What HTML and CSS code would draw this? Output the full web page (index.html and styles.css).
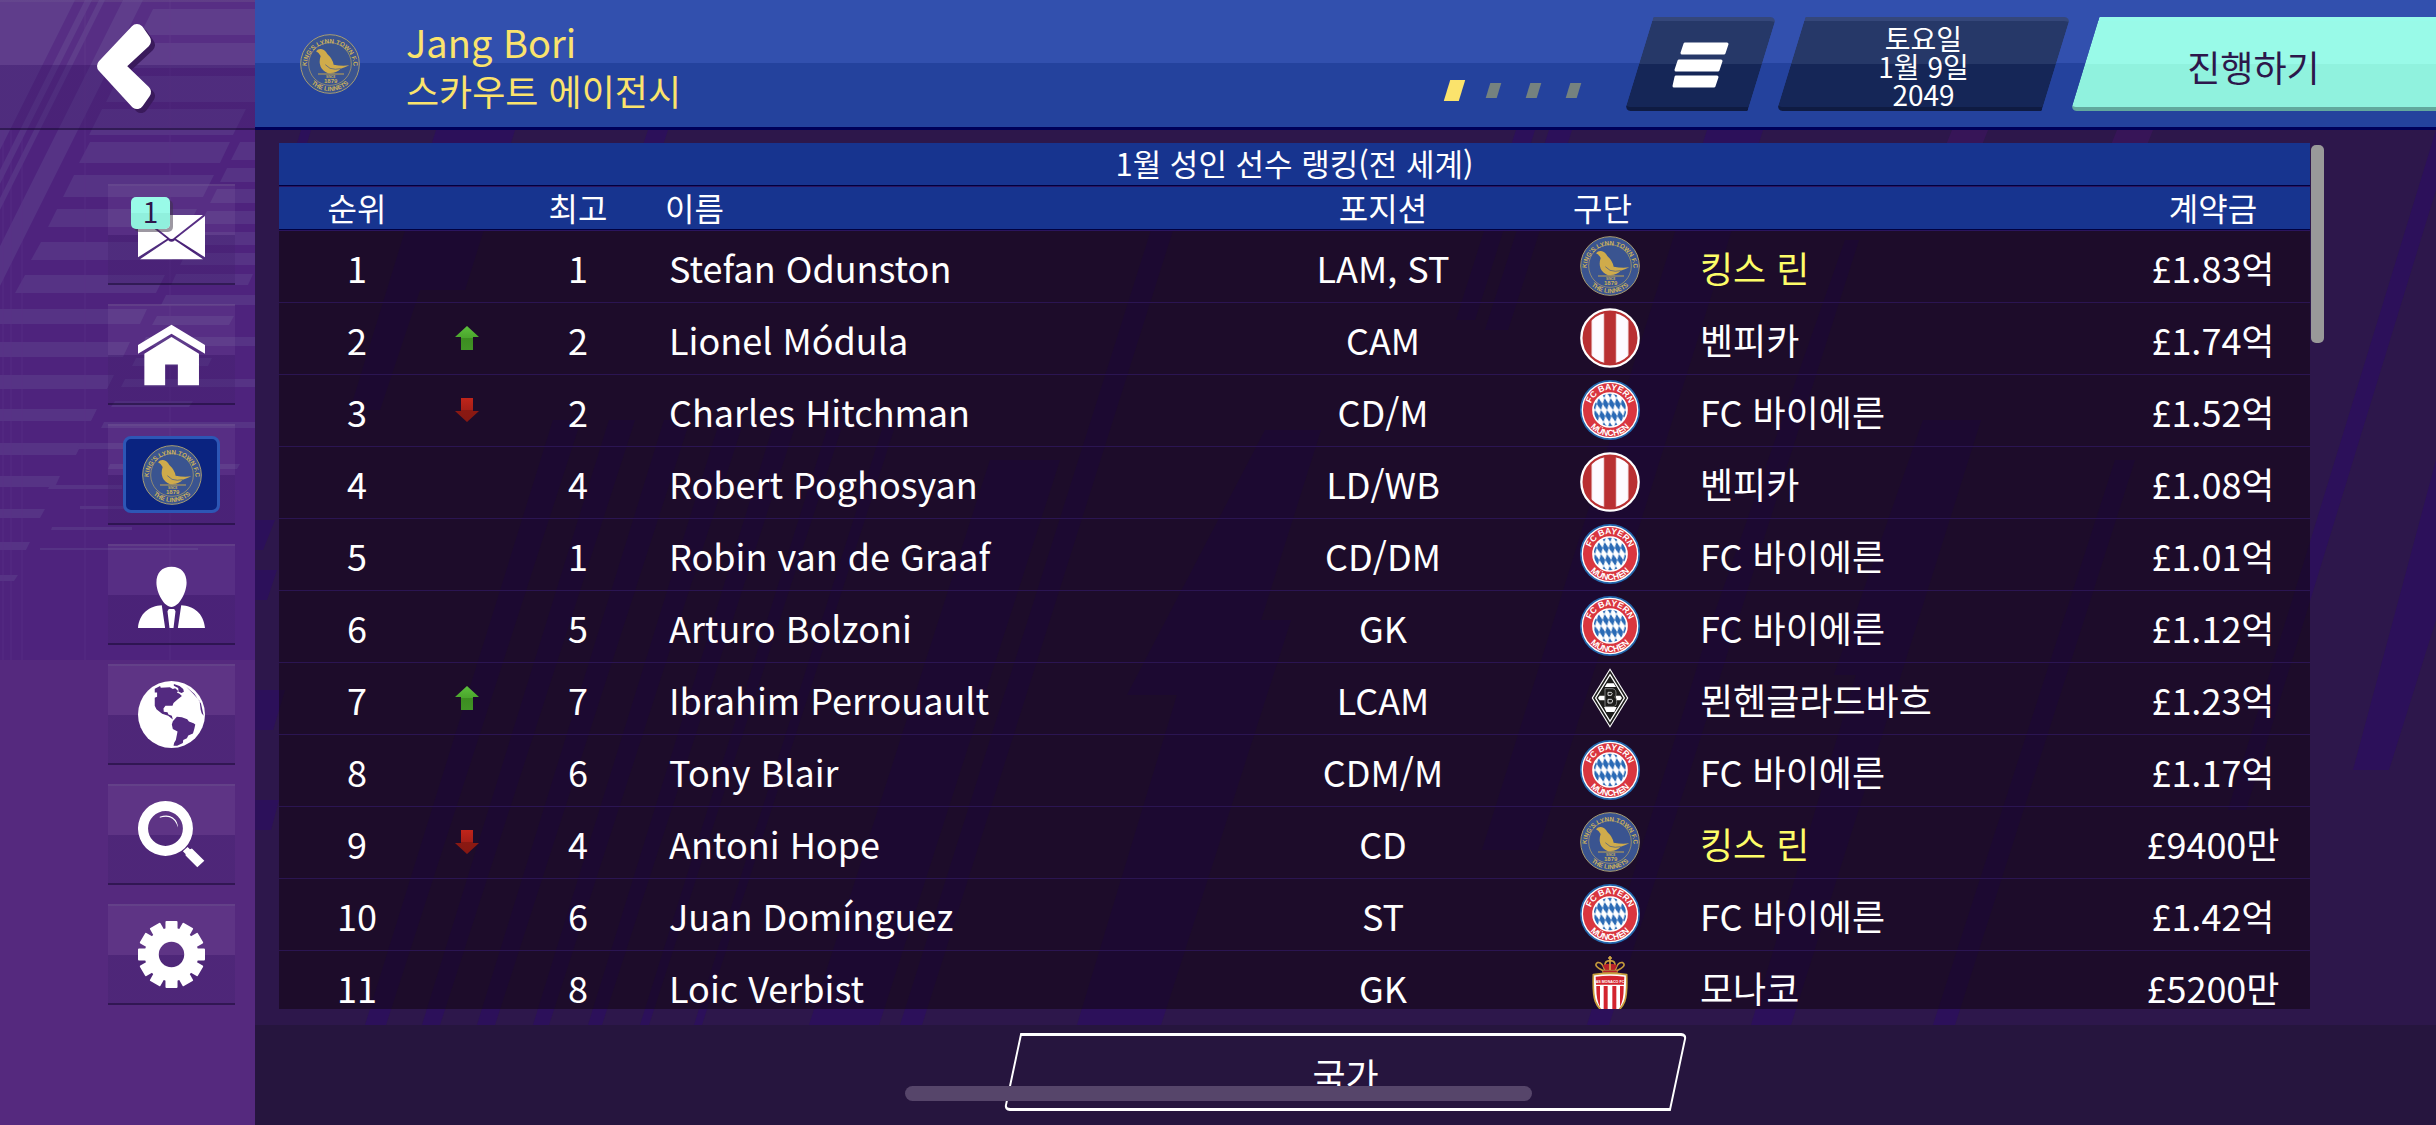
FILE: index.html
```html
<!DOCTYPE html>
<html lang="ko">
<head>
    <meta charset="UTF-8">
    <meta name="viewport" content="width=device-width, initial-scale=1.0">
    <title>1월 성인 선수 랭킹</title>
    <link rel="stylesheet" href="styles.css">
</head>
<body>
    <!-- shared badges and icons -->
    <svg class="defs" width="0" height="0" aria-hidden="true">
        <defs>
            <path id="lynnTop" d="M20 98 A70 70 0 1 1 160 98"/>
            <path id="lynnBottom" d="M12 112 A81 81 0 0 0 168 112"/>
            <path id="bayernTop" d="M30 90 A60 60 0 0 1 150 90"/>
            <path id="bayernBottom" d="M12 90 A78 78 0 0 0 168 90"/>
            <pattern id="lozenge" width="18" height="36" patternUnits="userSpaceOnUse" patternTransform="translate(90 90) skewX(12)">
                <rect width="18" height="36" fill="#fff"/>
                <path d="M9 0 L18 18 L9 36 L0 18 Z" fill="#2a6ab5"/>
            </pattern>
            <linearGradient id="upFill" x1="0" y1="0" x2="0" y2="1">
                <stop offset="0" stop-color="#5cc03c"/>
                <stop offset="0.5" stop-color="#4aa52c"/>
                <stop offset="0.5" stop-color="#3c8d20"/>
                <stop offset="1" stop-color="#419326"/>
            </linearGradient>
            <linearGradient id="downFill" x1="0" y1="0" x2="0" y2="1">
                <stop offset="0" stop-color="#c0251a"/>
                <stop offset="0.5" stop-color="#a51f17"/>
                <stop offset="0.5" stop-color="#8b1912"/>
                <stop offset="1" stop-color="#861812"/>
            </linearGradient>
            <clipPath id="benficaClip"><circle cx="90" cy="90" r="76"/></clipPath>
        </defs>

        <symbol id="lynn" viewBox="0 0 180 180">
            <circle cx="90" cy="90" r="88" fill="#3a5490" stroke="#a79d72" stroke-width="3"/>
            <circle cx="90" cy="90" r="64" fill="none" stroke="#b9a565" stroke-width="2"/>
            <text class="ring-gold"><textPath href="#lynnTop" startOffset="50%">KING'S LYNN TOWN F.C</textPath></text>
            <text class="ring-gold"><textPath href="#lynnBottom" startOffset="50%">THE LINNETS</textPath></text>
            <path fill="#cfab4b" d="M48 52 Q54 44 63 45 Q75 47 82 60 Q98 75 101 92 Q125 97 148 94 Q132 102 122 104 Q112 116 92 117 L108 119 L84 118 Q68 110 62 98 Q56 84 62 66 Q60 58 48 52 Z"/>
            <path d="M76 92 L90 103 Q106 108 122 104" fill="none" stroke="#3a5490" stroke-width="2"/>
            <path d="M54 120 H132" stroke="#c2a453" stroke-width="3"/>
            <text class="year-small" x="92" y="131">SINCE</text>
            <text class="year" x="92" y="147">1879</text>
        </symbol>

        <symbol id="benfica" viewBox="0 0 180 180">
            <circle cx="90" cy="90" r="86" fill="#b93032" stroke="#fff" stroke-width="7"/>
            <g clip-path="url(#benficaClip)" fill="#fdfaff" stroke="#e09a9c" stroke-width="2">
                <path d="M35 0 H72 V180 H35 Z"/>
                <path d="M108 0 H145 V180 H108 Z"/>
            </g>
        </symbol>

        <symbol id="bayern" viewBox="0 0 180 180">
            <circle cx="90" cy="90" r="90" fill="#2368ae"/>
            <circle cx="90" cy="90" r="83" fill="#d9363f" stroke="#fff" stroke-width="4"/>
            <circle cx="90" cy="90" r="51" fill="url(#lozenge)" stroke="#fff" stroke-width="5"/>
            <text class="ring-white"><textPath href="#bayernTop" startOffset="50%">FC BAYERN</textPath></text>
            <text class="ring-white"><textPath href="#bayernBottom" startOffset="50%">MÜNCHEN</textPath></text>
        </symbol>

        <symbol id="gladbach" viewBox="0 0 180 180">
            <path d="M90 1 L145 90 L90 179 L35 90 Z" fill="#fff"/>
            <path d="M90 7 L141 90 L90 173 L39 90 Z" fill="#1c1c1a"/>
            <path d="M90 20 L133 90 L90 160 L47 90 Z" fill="none" stroke="#fff" stroke-width="4"/>
            <path d="M81 46 H101 L108 57 H74 Z M72 117 H110 L103 132 H79 Z M54 90 L59 83 H74 V97 H59 Z M108 83 H121 L126 90 L121 97 H108 Z" fill="#fff"/>
            <path d="M75 62 H98 Q109 64 108 78 Q108 84 104 87 Q111 91 110 101 Q110 115 99 116 H75 Z" fill="#1c1c1a" stroke="#aaa" stroke-width="2"/>
            <path d="M84 73 H94 Q99 75 94 82 H84 Z M84 94 H95 Q101 98 95 105 H84 Z" fill="none" stroke="#ddd" stroke-width="3"/>
        </symbol>

        <symbol id="monaco" viewBox="0 0 180 180">
            <path d="M70 44 Q38 30 52 20 Q66 16 74 42 M78 42 Q68 14 90 14 Q112 14 102 42 M110 44 Q142 30 128 20 Q114 16 106 42" fill="none" stroke="#c49a3b" stroke-width="5"/>
            <path d="M68 28 L76 42 H104 L112 28 L100 24 H80 Z" fill="#b72029"/>
            <path d="M90 0 V42 M84 6 H96" stroke="#d5ab45" stroke-width="5"/>
            <path d="M68 43 H112 V50 H68 Z" fill="#b72029" stroke="#d5ab45" stroke-width="2"/>
            <path d="M40 56 Q90 48 140 56 Q142 115 134 136 Q122 166 90 178 Q58 166 46 136 Q38 115 40 56 Z" fill="#fff" stroke="#c9a03d" stroke-width="5"/>
            <path d="M47 62 Q90 56 133 62 L132 86 H48 Z M49 90 H60 V152 Q48 132 49 90 Z M71 90 H83 V170 L71 163 Z M97 90 H109 V163 L97 170 Z M120 90 H131 Q132 132 120 152 Z" fill="#d3242e"/>
            <text class="monaco-name" x="90" y="81">AS MONACO FC</text>
        </symbol>

        <symbol id="up" viewBox="0 0 24 24">
            <path d="M12 0 L24 11 H18 V24 H6 V11 H0 Z" fill="url(#upFill)"/>
        </symbol>
        <symbol id="down" viewBox="0 0 24 24">
            <path d="M12 24 L24 13 H18 V0 H6 V13 H0 Z" fill="url(#downFill)"/>
        </symbol>
    </svg>

    <div class="app">
        <aside class="sidebar">
            <svg class="sidebar-art" viewBox="0 0 255 660" preserveAspectRatio="none" aria-hidden="true">
                <rect width="255" height="660" fill="#4e237d"/>
                <g fill="#563385">
                    <path d="M0 0 H75 L0 150 Z M85 0 H92 L0 184 V170 Z M99 0 H105 L0 210 V198 Z M123 0 H143 L0 286 V246 Z"/>
                    <path d="M153 9 H255 V35 H140 Z M136 43 H255 V68 H124 Z M119 76 H255 V102 H106 Z M102 109 H246 L233 135 H89 Z"/>
                    <path d="M90 142 H230 L220 163 H79 Z M74 175 H214 L203 197 H63 Z M57 209 H197 L188 227 H48 Z M41 242 H181 L172 260 H31 Z M25 275 H165 L156 293 H15 Z"/>
                    <path d="M0 309 H147 L140 324 H0 Z M0 342 H130 L123 357 H0 Z M0 375 H114 L107 389 H0 Z M0 409 H97 L91 421 H0 Z M0 443 H82 L76 455 H0 Z M0 476 H60 L55 487 H0 Z M0 509 H45 L40 518 H0 Z M0 542 H30 L26 550 H0 Z M0 575 H18 L14 581 H0 Z"/>
                    <path d="M240 142 H255 V160 H231 Z M227 168 H255 V182 H220 Z M217 189 H255 V203 H210 Z M207 211 H255 V224 H200 Z M196 232 H255 V245 H190 Z M186 253 H255 V265 H180 Z M176 274 H253 L248 285 H171 Z M166 295 H255 V305 H161 Z M157 316 H234 L229 325 H152 Z M146 337 H255 V346 H141 Z M136 358 H212 L208 366 H132 Z M125 379 H255 V387 H121 Z M115 401 H193 L189 407 H111 Z M104 422 H255 V428 H101 Z M80 443 H140 L137 449 H77 Z M110 464 H240 L237 469 H108 Z M50 485 H122 V489 H48 Z M80 506 H190 V509 H80 Z M52 527 H132 V530 H51 Z M40 548 H198 V550 H40 Z"/>
                </g>
                <path d="M3 130 V660 M11 130 V660 M22 130 V660 M85 0 V660 M170 0 V660" stroke="#5a3389" stroke-opacity="0.6" fill="none"/>
            </svg>
            <button class="back" type="button" aria-label="뒤로">
                <svg width="64" height="92" viewBox="0 0 64 92" stroke-width="14" stroke-linejoin="round">
                    <path class="back-shadow" d="M49 14 L56 24 L29 49 L56 75 L49 85 L16 49 Z"/>
                    <path class="back-arrow" d="M45 10 L52 20 L25 45 L52 71 L45 81 L12 45 Z"/>
                </svg>
            </button>
            <nav class="menu">
                <a class="menu-item" href="#mail" aria-label="메일">
                    <svg class="icon" viewBox="0 0 200 200">
                        <path d="M6 42 H194 L109 109 Q100 118 91 109 Z M0 45 L87 113 L0 168 Z M200 45 L113 113 L200 168 Z M6 174 L90 117 Q100 127 110 117 L194 174 Z"/>
                    </svg>
                    <span class="count">1</span>
                </a>
                <a class="menu-item" href="#home" aria-label="홈">
                    <svg class="icon" viewBox="0 0 200 200">
                        <path d="M100 11 L200 72 V98 L100 38 L0 98 V72 Z M100 48 L182 98 V192 H119 V130 H81 V192 H19 V98 Z"/>
                    </svg>
                </a>
                <a class="menu-item" href="#club" aria-label="구단">
                    <span class="selected"><svg class="crest"><use href="#lynn"/></svg></span>
                </a>
                <a class="menu-item" href="#manager" aria-label="감독">
                    <svg class="icon" viewBox="0 0 200 200">
                        <path d="M100 17 C130 17 145 37 145 64 C145 95 122 137 100 137 C78 137 55 95 55 64 C55 37 70 17 100 17 Z M71 132 L81 200 H0 C4 155 35 134 71 132 Z M129 132 L119 200 H200 C196 155 165 134 129 132 Z M92 143 H108 L112 150 L106 200 H94 L88 150 Z"/>
                    </svg>
                </a>
                <a class="menu-item" href="#world" aria-label="세계">
                    <svg class="icon" viewBox="0 0 200 200">
                        <circle cx="100" cy="100" r="100"/>
                        <path class="cut" d="M50 23 L66 15 L68 20 L95 19 L104 24 L111 22 L120 30 L116 34 L124 38 L131 45 L117 56 L106 66 L103 74 H82 L76 82 L77 92 L88 93 L91 100 L101 104 L104 115 L90 104 L72 98 L55 84 L50 74 V50 L57 47 V34 L50 34 Z M104 120 L116 107 L131 108 L147 114 L152 121 L166 126 L171 130 L168 143 L164 157 L150 163 L146 171 L135 176 L134 185 L117 193 H106 L108 184 L113 176 L118 151 L104 143 L101 130 Z M107 9 L124 15 L135 24 L137 32 L130 36 L121 32 L120 21 L107 14 Z M144 17 L168 38 L188 67 L196 104 L190 96 L187 86 L184 60 L165 38 Z"/>
                    </svg>
                </a>
                <a class="menu-item" href="#search" aria-label="검색">
                    <svg class="icon" viewBox="0 0 200 200">
                        <path fill-rule="evenodd" d="M82 0 A82 82 0 1 1 82 164 A82 82 0 1 1 82 0 Z M82 30 A52 52 0 1 0 82 134 A52 52 0 1 0 82 30 Z M134 150 L148 137 L155 144 L161 142 L198 178 L177 198 L142 163 V158 Z M65 47 Q88 38 104 49 Q119 60 119 79 Q113 56 96 49 Q83 44 65 50 Z"/>
                    </svg>
                </a>
                <a class="menu-item" href="#settings" aria-label="설정">
                    <svg class="icon" viewBox="0 0 200 200">
                        <g stroke="#fff" stroke-width="6" stroke-linejoin="round">
                            <path id="tooth" d="M85 30 V3 H115 V30 Z"/>
                            <use href="#tooth" transform="rotate(30 100 100)"/>
                            <use href="#tooth" transform="rotate(60 100 100)"/>
                            <use href="#tooth" transform="rotate(90 100 100)"/>
                            <use href="#tooth" transform="rotate(120 100 100)"/>
                            <use href="#tooth" transform="rotate(150 100 100)"/>
                            <use href="#tooth" transform="rotate(180 100 100)"/>
                            <use href="#tooth" transform="rotate(210 100 100)"/>
                            <use href="#tooth" transform="rotate(240 100 100)"/>
                            <use href="#tooth" transform="rotate(270 100 100)"/>
                            <use href="#tooth" transform="rotate(300 100 100)"/>
                            <use href="#tooth" transform="rotate(330 100 100)"/>
                        </g>
                        <circle cx="100" cy="100" r="59" fill="none" stroke="#fff" stroke-width="42"/>
                    </svg>
                </a>
            </nav>
        </aside>

        <div class="page">
            <header class="topbar">
                <svg class="crest"><use href="#lynn"/></svg>
                <div class="manager">
                    <h1>Jang Bori</h1>
                    <p>스카우트 에이전시</p>
                </div>
                <div class="pager">
                    <span class="dot active"></span>
                    <span class="dot"></span>
                    <span class="dot"></span>
                    <span class="dot"></span>
                </div>
                <div class="actions">
                    <button class="slant burger" type="button" aria-label="메뉴">
                        <svg width="57" height="46" viewBox="0 0 57 46" stroke="#fff" stroke-width="3" stroke-linejoin="round" fill="#fff">
                            <path d="M13 2 H55 L52 11 H10 Z M7 19 H49 L46 28 H4 Z M4 35 H45 L42 44 H2 Z"/>
                        </svg>
                    </button>
                    <button class="slant date" type="button"><span>토요일<br>1월 9일<br>2049</span></button>
                    <button class="slant go" type="button"><span>진행하기</span></button>
                </div>
            </header>

            <main class="content">
                <svg class="content-art" viewBox="0 0 2181 895" preserveAspectRatio="none" aria-hidden="true">
                    <g fill="#2c105a">
                        <path d="M46 0 h10 l-12 40 h-10 Z M181 0 h79 l-50 160 h-45 l-40 120 h-30 Z M393 0 h20 l-30 90 h-20 Z"/>
                        <path d="M298 290 h28 l-195 605 h-21 Z M354 290 h26 l-195 605 h-18 Z M409 290 h26 l-195 605 h-18 Z M465 290 h24 l-195 605 h-16 Z M520 290 h22 l-195 605 h-14 Z M575 290 h14 l-195 605 h-9 Z M630 290 h12 l-195 605 h-8 Z"/>
                        <path d="M915 40 h22 l-270 855 h-22 Z M735 330 h70 l-181 565 h-70 Z M1010 300 h56 l-60 190 h30 l-130 405 h-84 l100 -330 h-50 Z"/>
                        <path d="M1261 0 h19 l-60 190 h-19 Z M1294 0 h23 l-64 200 h-23 Z M1452 0 h56 l-225 720 h-56 Z M1590 110 h14 l-250 785 h-22 l120 -390 Z"/>
                        <path d="M1668 290 h58 l-190 605 h-40 l105 -350 h-22 Z M1860 330 h20 l-180 565 h-22 Z"/>
                        <path d="M2181 0 v60 l-190 620 h-18 Z M2181 330 v160 l-47 150 h-36 Z M0 390 h20 l-12 30 h-8 Z M0 440 h22 l-10 30 h-12 Z M0 560 h30 l-12 40 h-18 Z M0 670 h24 l-8 30 h-16 Z"/>
                    </g>
                    <path fill="#371558" d="M1697 0 h36 l-12 30 h-36 Z M1862 0 h36 l-12 30 h-36 Z"/>
                </svg>

                <div class="panel">
                    <table class="ranking">
                        <colgroup>
                            <col class="c-rank"><col class="c-trend"><col class="c-best"><col class="c-name">
                            <col class="c-pos"><col class="c-crest"><col class="c-club"><col class="c-fee">
                        </colgroup>
                        <thead>
                            <tr><th class="title" colspan="8">1월 성인 선수 랭킹(전 세계)</th></tr>
                            <tr>
                                <th>순위</th>
                                <th></th>
                                <th>최고</th>
                                <th class="left">이름</th>
                                <th>포지션</th>
                                <th class="left flush" colspan="2">구단</th>
                                <th>계약금</th>
                            </tr>
                        </thead>
                        <tbody>
                            <tr>
                                <td>1</td>
                                <td></td>
                                <td>1</td>
                                <td class="left">Stefan Odunston</td>
                                <td>LAM, ST</td>
                                <td class="pic"><svg class="crest"><use href="#lynn"/></svg></td>
                                <td class="club own">킹스 린</td>
                                <td>£1.83억</td>
                            </tr>
                            <tr>
                                <td>2</td>
                                <td class="pic"><svg class="trend"><use href="#up"/></svg></td>
                                <td>2</td>
                                <td class="left">Lionel Módula</td>
                                <td>CAM</td>
                                <td class="pic"><svg class="crest"><use href="#benfica"/></svg></td>
                                <td class="club">벤피카</td>
                                <td>£1.74억</td>
                            </tr>
                            <tr>
                                <td>3</td>
                                <td class="pic"><svg class="trend"><use href="#down"/></svg></td>
                                <td>2</td>
                                <td class="left">Charles Hitchman</td>
                                <td>CD/M</td>
                                <td class="pic"><svg class="crest"><use href="#bayern"/></svg></td>
                                <td class="club">FC 바이에른</td>
                                <td>£1.52억</td>
                            </tr>
                            <tr>
                                <td>4</td>
                                <td></td>
                                <td>4</td>
                                <td class="left">Robert Poghosyan</td>
                                <td>LD/WB</td>
                                <td class="pic"><svg class="crest"><use href="#benfica"/></svg></td>
                                <td class="club">벤피카</td>
                                <td>£1.08억</td>
                            </tr>
                            <tr>
                                <td>5</td>
                                <td></td>
                                <td>1</td>
                                <td class="left">Robin van de Graaf</td>
                                <td>CD/DM</td>
                                <td class="pic"><svg class="crest"><use href="#bayern"/></svg></td>
                                <td class="club">FC 바이에른</td>
                                <td>£1.01억</td>
                            </tr>
                            <tr>
                                <td>6</td>
                                <td></td>
                                <td>5</td>
                                <td class="left">Arturo Bolzoni</td>
                                <td>GK</td>
                                <td class="pic"><svg class="crest"><use href="#bayern"/></svg></td>
                                <td class="club">FC 바이에른</td>
                                <td>£1.12억</td>
                            </tr>
                            <tr>
                                <td>7</td>
                                <td class="pic"><svg class="trend"><use href="#up"/></svg></td>
                                <td>7</td>
                                <td class="left">Ibrahim Perrouault</td>
                                <td>LCAM</td>
                                <td class="pic"><svg class="crest"><use href="#gladbach"/></svg></td>
                                <td class="club">묀헨글라드바흐</td>
                                <td>£1.23억</td>
                            </tr>
                            <tr>
                                <td>8</td>
                                <td></td>
                                <td>6</td>
                                <td class="left">Tony Blair</td>
                                <td>CDM/M</td>
                                <td class="pic"><svg class="crest"><use href="#bayern"/></svg></td>
                                <td class="club">FC 바이에른</td>
                                <td>£1.17억</td>
                            </tr>
                            <tr>
                                <td>9</td>
                                <td class="pic"><svg class="trend"><use href="#down"/></svg></td>
                                <td>4</td>
                                <td class="left">Antoni Hope</td>
                                <td>CD</td>
                                <td class="pic"><svg class="crest"><use href="#lynn"/></svg></td>
                                <td class="club own">킹스 린</td>
                                <td>£9400만</td>
                            </tr>
                            <tr>
                                <td>10</td>
                                <td></td>
                                <td>6</td>
                                <td class="left">Juan Domínguez</td>
                                <td>ST</td>
                                <td class="pic"><svg class="crest"><use href="#bayern"/></svg></td>
                                <td class="club">FC 바이에른</td>
                                <td>£1.42억</td>
                            </tr>
                            <tr>
                                <td>11</td>
                                <td></td>
                                <td>8</td>
                                <td class="left">Loic Verbist</td>
                                <td>GK</td>
                                <td class="pic"><svg class="crest"><use href="#monaco"/></svg></td>
                                <td class="club">모나코</td>
                                <td>£5200만</td>
                            </tr>
                        </tbody>
                    </table>
                </div>
                <div class="scrollbar"><div class="thumb"></div></div>
            </main>

            <footer class="bottombar">
                <button class="nation" type="button"><span>국가</span></button>
            </footer>
        </div>
    </div>
    <div class="home-indicator"></div>
</body>
</html>
```

FILE: styles.css
```css
* {
    box-sizing: border-box;
}

body {
    margin: 0;
    background-color: #2d174b;
    color: white;
    font-family: "Noto Sans CJK KR", "Noto Sans", sans-serif;
    font-size: 36px;
    overflow: hidden;
}

h1, p {
    margin: 0;
    font-weight: 400;
}

h1 {
    font-size: 38px;
}

button {
    border: 0;
    padding: 0;
    background: none;
    color: inherit;
    font-family: inherit;
    font-size: 36px;
    cursor: pointer;
}

svg {
    display: block;
}

.defs {
    position: absolute;
}

.crest {
    width: 60px;
    height: 60px;
}

.trend {
    width: 24px;
    height: 24px;
}

.app {
    display: grid;
    grid-template-columns: 255px 1fr;
    height: 100vh;
}

/* left column */
.sidebar {
    position: relative;
    background-color: #55297e;
}

.sidebar-art {
    position: absolute;
    top: 0;
    left: 0;
    width: 100%;
    height: 660px;
}

.back, .menu-item {
    position: relative;
    display: flex;
    align-items: center;
    justify-content: center;
    border-top: 2px solid rgba(255, 255, 255, 0.12);
    border-bottom: 2px solid rgba(20, 5, 50, 0.6);
    background: linear-gradient(rgba(255, 255, 255, 0.05) 50%, rgba(66, 33, 110, 0.35) 50%);
}

.back {
    width: 100%;
    height: 130px;
    padding-top: 4px;
    padding-right: 8px;
}

.back-arrow {
    fill: white;
    stroke: white;
}

.back-shadow {
    fill: #3a1a5c;
    stroke: #3a1a5c;
}

.menu {
    display: flex;
    flex-direction: column;
    gap: 19px;
    padding: 54px 20px 0 108px;
}

.menu-item {
    height: 101px;
}

.icon {
    width: 67px;
    height: 67px;
    fill: white;
}

.icon .cut {
    fill: #532a80;
}

.count {
    position: absolute;
    top: 11px;
    left: 23px;
    width: 39px;
    height: 32px;
    border-radius: 5px;
    background: linear-gradient(#99fae8 50%, #90f0dd 50%);
    box-shadow: 3px 3px 0 rgba(60, 50, 70, 0.5);
    color: #2d174b;
    font-size: 28px;
    line-height: 28px;
    text-align: center;
}

.selected {
    display: flex;
    align-items: center;
    justify-content: center;
    width: 97px;
    height: 77px;
    border: 3px solid #2d56b5;
    border-radius: 8px;
    background-color: #0a2380;
}

/* right column */
.page {
    display: flex;
    flex-direction: column;
    min-width: 0;
    height: 100vh;
}

.topbar {
    display: flex;
    align-items: center;
    height: 130px;
    padding-left: 45px;
    border-bottom: 3px solid #000058;
    background: linear-gradient(#3250ae 50%, #24429d 50%);
}

.manager {
    flex: 1;
    padding: 4px 0 0 46px;
    color: #fbe36c;
    line-height: 48px;
}

.pager {
    display: flex;
    align-items: center;
    gap: 29px;
    padding: 54px 46px 0 0;
}

.dot {
    width: 11px;
    height: 15px;
    background-color: #75827f;
    transform: skewX(-17deg);
}

.dot.active {
    width: 15px;
    height: 21px;
    margin-right: -3px;
    background-color: #fbe36c;
}

.actions {
    display: flex;
    gap: 1px;
}

.slant {
    position: relative;
    display: flex;
    align-items: center;
    justify-content: center;
    height: 94px;
    z-index: 0;
}

.slant::before {
    content: "";
    position: absolute;
    inset: 0 14px;
    z-index: -1;
    transform: skewX(-17deg);
    border-radius: 0 6px 0 6px;
    border-top: 4px solid #35477a;
    border-bottom: 4px solid #0f1b42;
    background: linear-gradient(#263868 50%, #152657 50%);
}

.burger {
    width: 151px;
    padding-top: 2px;
}

.date {
    width: 293px;
    padding-top: 4px;
    font-size: 28px;
    line-height: 28px;
}

.go {
    width: 365px;
    padding-top: 4px;
    color: #2d174b;
    overflow: hidden;
}

.go::before {
    right: -40px;
    border-top-color: #98fbea;
    border-bottom-color: #62a99d;
    background: linear-gradient(#99fae8 50%, #90f2de 50%);
}

.content {
    position: relative;
    display: flex;
    flex: 1;
    min-height: 0;
    padding: 13px 112px 16px 24px;
}

.content-art {
    position: absolute;
    inset: 0;
    width: 100%;
    height: 100%;
}

.panel {
    position: relative;
    flex: 1;
    overflow-y: auto;
    scrollbar-width: none;
    background-color: rgba(16, 3, 16, 0.55);
}

.scrollbar {
    position: relative;
    width: 14px;
    padding-top: 2px;
}

.thumb {
    width: 13px;
    height: 198px;
    margin-left: 1px;
    border-radius: 5px;
    background-color: #999;
}

.ranking {
    width: 100%;
    table-layout: fixed;
    border-collapse: separate;
    border-spacing: 0;
    text-align: center;
}

.c-rank { width: 156px; }
.c-trend { width: 64px; }
.c-best { width: 158px; }
.c-name { width: 536px; }
.c-pos { width: 380px; }
.c-crest { width: 74px; }
.c-fee { width: 194px; }

th, td {
    padding: 0;
    font-weight: 400;
    white-space: nowrap;
}

th {
    height: 44px;
    border-bottom: 1px solid #2b1560;
    background-color: #17348f;
    box-shadow: inset 0 -1px #00003f;
    font-size: 32px;
    line-height: 40px;
    vertical-align: top;
}

th.title {
    font-size: 31px;
}

td {
    height: 72px;
    border-bottom: 1px solid #2b1552;
    line-height: 60px;
}

.left {
    padding-left: 12px;
    text-align: left;
}

th.left {
    padding-left: 8px;
}

th.flush {
    padding-left: 0;
}

.pic {
    padding: 0 0 2px;
}

.pic svg {
    margin: 0 auto;
}

.club {
    padding-left: 53px;
    text-align: left;
}

.own {
    color: #fdfd68;
}

/* bottom bar */
.bottombar {
    display: flex;
    justify-content: center;
    height: 100px;
    padding-top: 8px;
    background-color: #26153e;
}

.nation {
    position: relative;
    width: 683px;
    height: 78px;
    padding-top: 4px;
}

.nation::before {
    content: "";
    position: absolute;
    inset: 0 8px;
    transform: skewX(-12deg);
    border: 2px solid white;
    border-top-width: 3px;
    border-bottom-width: 3px;
    border-radius: 0 6px 0 6px;
}

.home-indicator {
    position: fixed;
    bottom: 24px;
    left: 50%;
    width: 627px;
    height: 15px;
    margin-left: -313px;
    border-radius: 8px;
    background-color: #56456a;
}

/* badge lettering */
.ring-gold {
    fill: #cdb25a;
    font-family: "Liberation Sans", sans-serif;
    font-size: 19px;
    font-weight: 700;
    text-anchor: middle;
}

.ring-white {
    fill: white;
    font-family: "Liberation Sans", sans-serif;
    font-size: 26px;
    font-weight: 700;
    text-anchor: middle;
}

.year, .year-small, .monaco-name {
    fill: #cdb25a;
    font-family: "Liberation Sans", sans-serif;
    font-size: 18px;
    font-weight: 700;
    text-anchor: middle;
}

.year-small {
    font-size: 9px;
}

.monaco-name {
    fill: white;
    font-size: 11px;
}
```
